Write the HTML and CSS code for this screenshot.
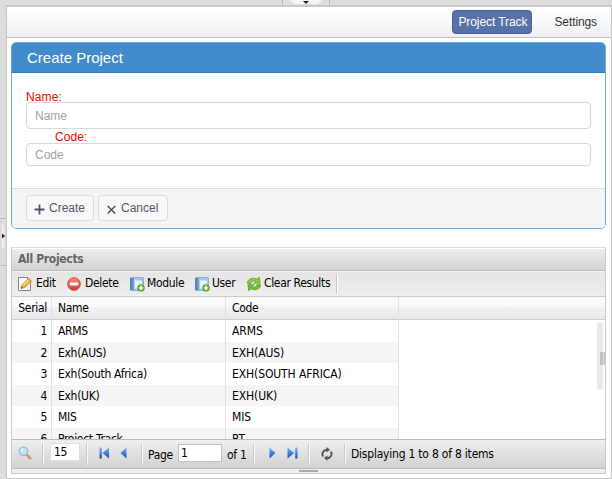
FILE: index.html
```html
<!DOCTYPE html>
<html lang="en">
<head>
<meta charset="utf-8">
<title>Project Track</title>
<link rel="stylesheet" href="styles.css">
</head>
<body>
<svg class="defs" width="0" height="0" aria-hidden="true">
  <defs>
    <linearGradient id="blue" x1="0" y1="0" x2="0" y2="1"><stop offset="0" stop-color="#7fb5f5"/><stop offset="1" stop-color="#1248c0"/></linearGradient>
    <linearGradient id="red" x1="0" y1="0" x2="0" y2="1"><stop offset="0" stop-color="#f58b80"/><stop offset="1" stop-color="#d8382f"/></linearGradient>
    <linearGradient id="book" x1="0" y1="0" x2="1" y2="0"><stop offset="0" stop-color="#4f88b8"/><stop offset=".28" stop-color="#78aad2"/><stop offset=".3" stop-color="#a8cbe8"/><stop offset="1" stop-color="#9cc4e4"/></linearGradient>
    <symbol id="notebook" viewBox="0 0 16 16">
      <rect x="1.5" y="1.5" width="13" height="13" rx=".8" fill="url(#book)" stroke="#85b2d6"/>
      <path d="M6 4.5h7v8H6z" fill="#edf5fb"/>
      <path d="M2 2v12" stroke="#4f88b8" stroke-width="2"/>
      <circle cx="12" cy="12" r="3.8" fill="#62ac20"/>
      <path d="M12 9.8v4.4M9.8 12h4.4" stroke="#fff" stroke-width="1.7"/>
    </symbol>
  </defs>
</svg>
<div class="shell">
  <div class="north"><div class="notch"><svg width="32" height="5" viewBox="0 0 32 5"><path d="M0 0h32l-4 4H4z" fill="#f5f5f5"/><path d="M13 1h6L16 4z" fill="#222"/></svg></div></div>
  <div class="west"><div class="grip"><svg width="6" height="31" viewBox="0 0 6 31"><path d="M1 0l4 5v21l-4 5z" fill="#eee" stroke="#d0d0d0" stroke-width=".7"/><path d="M2 12.5v5l3-2.5z" fill="#222"/></svg></div></div>
  <main class="main">
    <nav class="nav"><a class="tab active">Project Track</a><a class="tab">Settings</a></nav>
    <section class="card">
      <h2 class="card-title">Create Project</h2>
      <form class="form">
        <label class="label">Name:</label>
        <input class="input name-input" placeholder="Name">
        <label class="label code-label">Code:</label>
        <input class="input code-input" placeholder="Code">
      </form>
      <div class="card-foot">
        <button class="btn create"><svg width="11" height="11" viewBox="0 0 11 11"><path d="M5.5 .5v10M.5 5.5h10" stroke="#4d5664" stroke-width="1.8"/></svg>Create</button>
        <button class="btn cancel"><svg width="11" height="11" viewBox="0 0 11 11"><path d="M1.7 2l7.5 7.5M9.2 2L1.7 9.5" stroke="#4d5664" stroke-width="1.5"/></svg>Cancel</button>
      </div>
    </section>
    <section class="grid">
      <h3 class="grid-title"><span>All Projects</span></h3>
      <div class="toolbar">
        <span class="tool edit"><svg width="16" height="16" viewBox="0 0 16 16"><path d="M1.5 1.5h9l3 3v10h-12z" fill="#fafafa" stroke="#858585"/><path d="M10.5 1.5v3h3" fill="#eee" stroke="#858585"/><path d="M4 12.5l1-4 6.7-6.2 2.8 2.8-6.6 6.4z" fill="#edac31" stroke="#b8801d" stroke-width=".6"/><path d="M6 9.3l6.5-6" stroke="#ffe27b" stroke-width="1.3"/><path d="M11 3l1.2-1.1 2.7 2.7-1.2 1.2z" fill="#e99688"/><path d="M4 12.5l.4-1.7 1.4 1.2z" fill="#333"/></svg><b>Edit</b></span>
        <span class="tool delete"><svg width="16" height="16" viewBox="0 0 16 16"><circle cx="8" cy="8" r="6.3" fill="url(#red)" stroke="#cc4b43"/><rect x="3.7" y="6.4" width="8.6" height="3" rx=".7" fill="#fff"/></svg><b>Delete</b></span>
        <span class="tool module"><svg width="16" height="16"><use href="#notebook"/></svg><b>Module</b></span>
        <span class="tool user"><svg width="16" height="16"><use href="#notebook"/></svg><b>User</b></span>
        <span class="tool clear"><svg width="16" height="16" viewBox="0 0 16 16"><path d="M1.5 7.4C1.2 3 6.5.8 10.6 3.2l2.6-1.9.9 6H7.8l2-1.9C7.8 4.300 5.200 5 5 7.400z" fill="#8ccc3c" stroke="#579520" stroke-width=".7"/><path d="M14.500 8.700c.3 4.300-5 6.400-9.100 4.100l-2.600 1.900-.9-6h6.300l-2 1.900c2 1.100 4.600.4 4.800-1.900z" fill="#76bb2c" stroke="#579520" stroke-width=".7"/></svg><b>Clear Results</b></span>
        <i class="tool-end"></i>
      </div>
      <div class="table">
        <div class="row head"><span class="cell serial">Serial</span><span class="cell">Name</span><span class="cell">Code</span></div>
        <div class="rows">
          <div class="row"><span class="cell serial">1</span><span class="cell">ARMS</span><span class="cell">ARMS</span></div>
          <div class="row"><span class="cell serial">2</span><span class="cell">Exh(AUS)</span><span class="cell">EXH(AUS)</span></div>
          <div class="row"><span class="cell serial">3</span><span class="cell">Exh(South Africa)</span><span class="cell">EXH(SOUTH AFRICA)</span></div>
          <div class="row"><span class="cell serial">4</span><span class="cell">Exh(UK)</span><span class="cell">EXH(UK)</span></div>
          <div class="row"><span class="cell serial">5</span><span class="cell">MIS</span><span class="cell">MIS</span></div>
          <div class="row"><span class="cell serial">6</span><span class="cell">Project Track</span><span class="cell">PT</span></div>
        </div>
        <div class="scrollbar"></div><div class="splitter"></div>
      </div>
      <div class="pager">
        <svg class="search" width="14" height="14" viewBox="0 0 14 14"><path d="M8.5 8.5l3.8 3.7" stroke="#c99b70" stroke-width="2.6" stroke-linecap="round"/><circle cx="5.5" cy="5.3" r="4.2" fill="#c6e2f8" stroke="#94bce0" stroke-width="1.3"/><path d="M3.2 5q.5-2 2.4-2.3" fill="none" stroke="#fff"/></svg>
        <i class="sep s1"></i><span class="box size">15</span><i class="sep s2"></i>
        <svg class="first" width="11" height="12" viewBox="0 0 11 12"><path d="M.5 .5h2.3v11H.5zM10 .5v11L3.5 6z" fill="url(#blue)"/></svg>
        <svg class="prev" width="7" height="12" viewBox="0 0 7 12"><path d="M6.5 .5v11L.5 6z" fill="url(#blue)"/></svg>
        <i class="sep s3"></i><span class="page">Page</span><span class="box number">1</span><span class="of">of 1</span><i class="sep s4"></i>
        <svg class="next" width="7" height="12" viewBox="0 0 7 12"><path d="M.5 .5v11l6-5.5z" fill="url(#blue)"/></svg>
        <svg class="last" width="11" height="12" viewBox="0 0 11 12"><path d="M8.2 .5h2.3v11H8.2zM.5 .5v11L7.2 6z" fill="url(#blue)"/></svg>
        <i class="sep s5"></i>
        <svg class="reload" width="12" height="14" viewBox="0 0 12 14"><path d="M2.100 9.500A4.500 4.500 0 0 1 6 2.700M9.900 4.500A4.500 4.500 0 0 1 6 11.300" fill="none" stroke="#555" stroke-width="1.9"/><path d="M5.500 0l3.600 2.800-3.600 2.800zM6.500 8.400v5.400L2.900 11.100z" fill="#555"/></svg>
        <i class="sep s6"></i><span class="status">Displaying 1 to 8 of 8 items</span>
      </div>
      <div class="resize"><i></i></div>
    </section>
  </main>
</div>
</body>
</html>
```
FILE: styles.css
```css
* { box-sizing: border-box; }
body { margin: 0; font-family: "Liberation Sans", Arial, sans-serif; font-size: 12px; overflow: hidden; }
svg { display: block; flex: none; }
.defs { position: absolute; }
.shell { width: 612px; height: 479px; display: grid; grid-template: 5px 1fr / 6px 1fr; background: #ddd; }
.north { grid-column: 1 / 3; display: flex; padding-left: 282px; }
.notch { width: 48px; height: 5px; border: solid #bbb; border-width: 0 1px; padding-left: 7px; background: #dfdfdf; }
.west { display: flex; align-items: flex-start; padding-top: 213px; }
.grip { width: 6px; height: 48px; border: solid #bbb; border-width: 1px 0; padding-top: 2px; }
.main { min-width: 0; background: #fff; border: 1px solid #c5c5c5; border-top: 2px solid #cacaca; display: flex; flex-direction: column; }
.nav { height: 31px; flex: none; display: flex; align-items: flex-start; justify-content: flex-end; padding: 2px 3px 0 0; background: linear-gradient(#fff, #eff0f3); border-bottom: 1px solid #bfc2c5; }
.tab { height: 25px; line-height: 26px; padding: 0 11px; color: #333; font-size: 12px; letter-spacing: -.1px; }
.tab.active { width: 80px; height: 24px; padding: 0 0 0 5px; margin: 1px 11px 0 0; background: #5871a8; border: 1px solid #485f98; border-radius: 4px; color: #fff; line-height: 22px; white-space: nowrap; letter-spacing: -.08px; }
.card { height: 187px; flex: none; margin: 4px 5px 0 4px; border: 1px solid #6daadf; border-radius: 5px; overflow: hidden; display: flex; flex-direction: column; }
.card-title { height: 31px; flex: none; margin: -1px -1px 0; padding-left: 15px; line-height: 32px; background: #428bca; border: 1px solid #2d7fc3; border-width: 0 1px 1px; color: #fff; font-size: 15px; font-weight: 400; }
.form { flex: 1; display: flex; flex-direction: column; padding: 17px 14px 0; }
.label { color: #f00; font-size: 12px; line-height: 14px; height: 12px; letter-spacing: .1px; }
.input { width: 565px; border: 1px solid #d8d8d8; border-radius: 4px; padding: 0 8px; font: 12px "Liberation Sans", Arial, sans-serif; background: #fff; outline: 0; }
.input::placeholder { color: #a0a3ab; opacity: 1; }
.name-input { height: 27px; margin-bottom: 1px; }
.code-label { margin-left: 29px; height: 13px; line-height: 14px; }
.code-input { height: 23px; }
.card-foot { height: 40px; border-top: 1px solid #ddd; background: #f4f4f4; display: flex; gap: 4px; padding: 6px 14px; }
.btn { height: 26px; border: 1px solid #dcdcdc; border-radius: 4px; background: #f8f8f8; color: #555968; font: 12px "Liberation Sans", Arial, sans-serif; display: flex; align-items: center; gap: 4px; padding: 0 7px; }
.btn svg { position: relative; top: 1px; }
.create { width: 68px; }
.cancel { width: 70px; }
.grid { height: 227px; flex: none; margin: 18px 5px 0 4px; border: 1px solid #ccc; border-top-color: #ddd; font: 12px "DejaVu Sans Condensed", Tahoma, sans-serif; display: flex; flex-direction: column; }
.grid-title { margin: 1px 0 0; height: 22px; flex: none; border-bottom: 1px solid #bdbdbd; background: linear-gradient(#ededed, #d3d3d3); color: #666; font-size: 12px; line-height: 21px; padding-left: 6px; letter-spacing: -.32px; }
.toolbar { height: 26px; flex: none; display: flex; align-items: center; background: linear-gradient(#f5f5f5, #e5e5e5 2px, #eee); border-bottom: 1px solid #ccc; padding-left: 5px; }
.tool { display: flex; align-items: center; gap: 2px; height: 16px; white-space: nowrap; flex: none; }
.tool b { font-weight: 400; letter-spacing: -.34px; position: relative; top: -1px; }
.edit { width: 49px; gap: 3px; }
.delete { width: 63px; gap: 3px; }
.module { width: 65px; }
.user { width: 52px; }
.clear { width: 90px; }
.tool-end { width: 1px; height: 20px; background: #c9c9c9; box-shadow: 1px 0 #fff; }
.table { flex: 1; min-height: 0; position: relative; background: #fff; overflow: hidden; }
.row { width: 387px; height: 21.5px; display: grid; grid-template-columns: 40px 174px 173px; line-height: 22.6px; letter-spacing: -.3px; }
.cell { border-right: 1px solid #e2e2e2; padding-left: 6px; white-space: nowrap; }
.rows .cell:last-child { letter-spacing: -.1px; }
.serial { padding: 0 4px 0 0; text-align: right; }
.row:nth-child(even) { background: #f5f5f5; }
.head { width: 100%; height: 23px; line-height: 23px; background: linear-gradient(#fafafa 45%, #f1f2f3 46%, #e6e8ea); border-bottom: 1px solid #ccc; }
.scrollbar { position: absolute; right: 2px; top: 25px; width: 6px; height: 68px; border-radius: 3px; background: #eaeaea; }
.splitter { position: absolute; right: 0; top: 55px; width: 5px; height: 13px; background: linear-gradient(90deg, #c1c0bd 3px, #ddd 3px, #ddd 4px, #c1c0bd 4px); }
.pager { height: 30px; flex: none; display: flex; align-items: center; padding-left: 6px; border: solid #bbb; border-width: 1px 0; background: linear-gradient(#efefef, #d2d2d2); white-space: nowrap; letter-spacing: -.3px; }
.search, .first, .prev, .next, .last { position: relative; top: -1px; }
.sep { width: 1px; height: 22px; background: #f8f8f8; box-shadow: -1px 0 #ccc; flex: none; }
.s1 { margin: 0 6px 0 11px; }
.box { height: 18px; border: 1px solid #b9c3cf; background: #fff; line-height: 17px; padding-left: 2px; flex: none; }
.size { width: 30px; border-color: #dde1e6; padding-left: 3px; position: relative; top: -2px; letter-spacing: -.3px; }
.s2 { margin: 0 11px 0 7px; }
.prev { margin-left: 10px; }
.s3 { margin: 0 5px 0 15px; }
.page { width: 30px; position: relative; top: 1px; }
.number { width: 44px; position: relative; top: -1px; }
.of { width: 23px; margin-left: 5px; position: relative; top: 1px; }
.s4 { margin: 0 14px 0 4px; }
.last { margin-left: 11px; }
.s5 { margin: 0 11px 0 11px; }
.s6 { margin: 0 5px 0 12px; }
.status { letter-spacing: -.22px; }
.resize { height: 4px; background: #eee; display: flex; justify-content: center; }
.resize i { width: 19px; height: 2px; margin-top: 1px; background: #aaa; }
```
